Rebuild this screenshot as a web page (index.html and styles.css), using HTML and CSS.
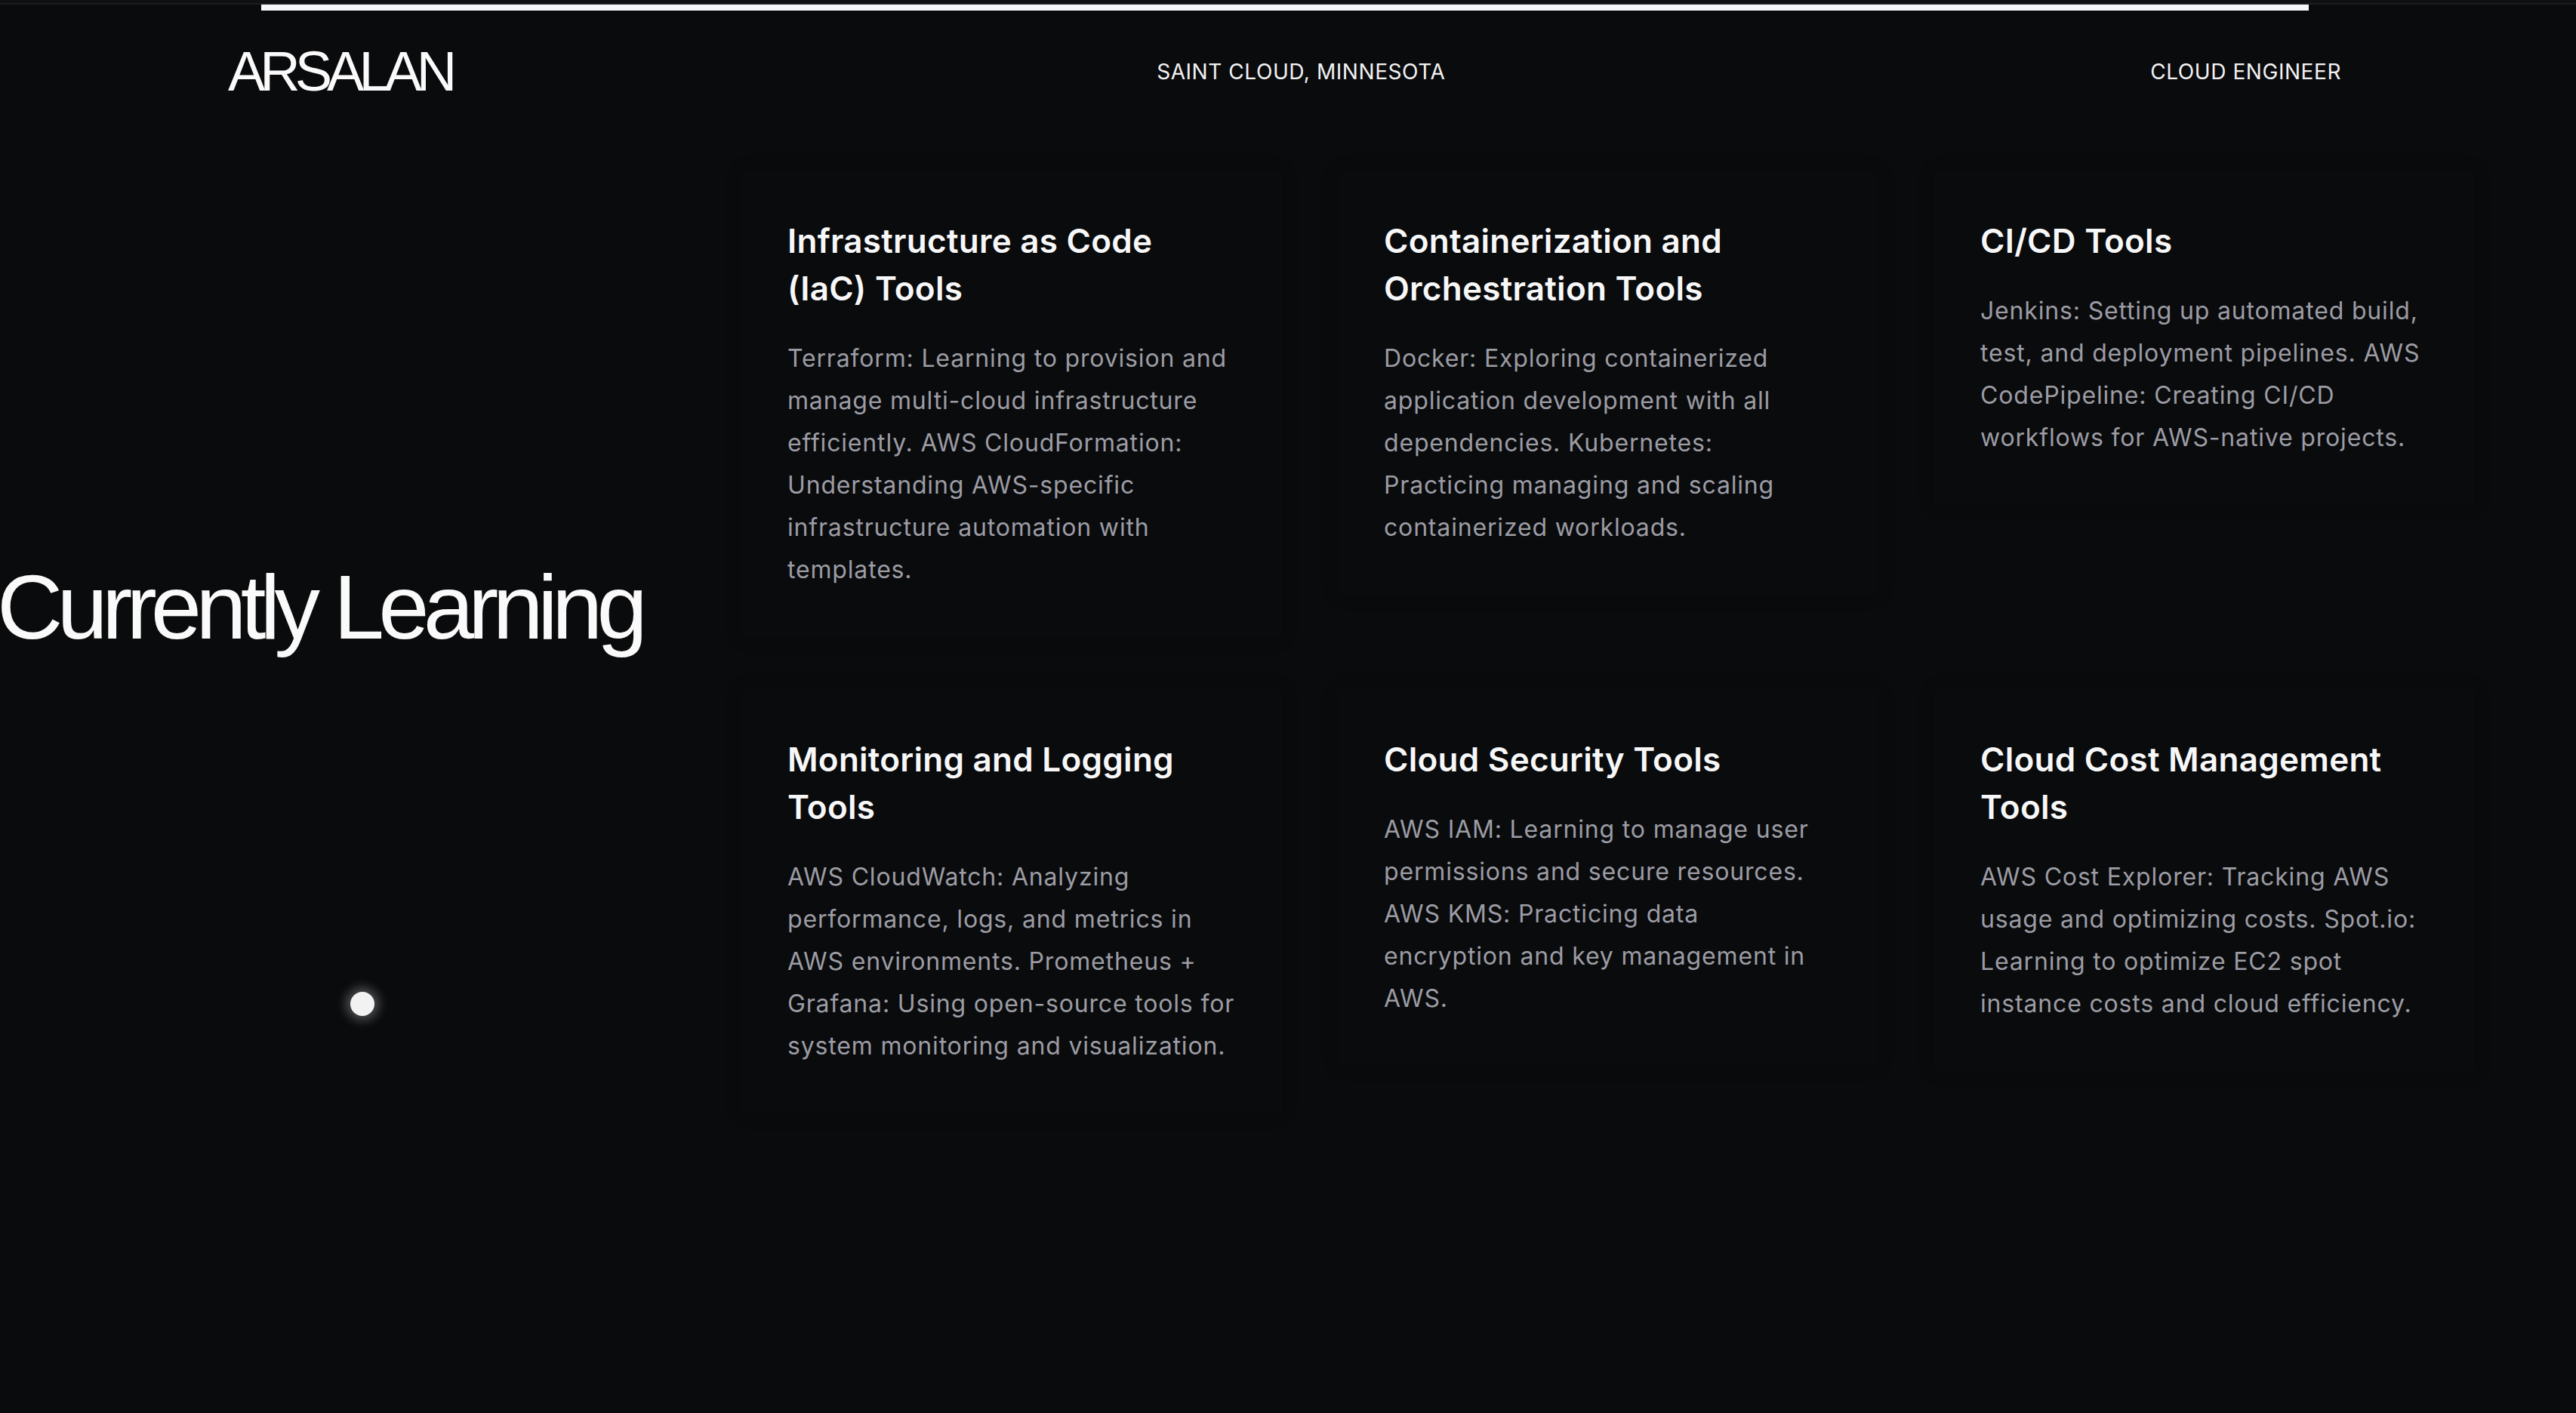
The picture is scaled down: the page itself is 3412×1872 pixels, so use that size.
FILE: index.html
```html
<!DOCTYPE html>
<html lang="en">
<head>
<meta charset="utf-8">
<title>Arsalan — Currently Learning</title>
<link rel="stylesheet" href="styles.css">
</head>
<body>
  <div class="scroll-track"></div>
  <div class="scroll-progress"><div class="scroll-progress-bar"></div></div>
  <header class="site-header">
    <div class="logo">ARSALAN</div>
    <div class="header-meta">SAINT CLOUD, MINNESOTA</div>
    <div class="header-meta">CLOUD ENGINEER</div>
  </header>
  <main class="learning">
    <div class="learning-aside">
      <h1 class="learning-title">Currently Learning</h1>
    </div>
    <div class="learning-grid">
      <article class="card">
        <h2 class="card-title">Infrastructure as Code (IaC) Tools</h2>
        <p class="card-text">Terraform: Learning to provision and manage multi-cloud infrastructure efficiently. AWS CloudFormation: Understanding AWS-specific infrastructure automation with templates.</p>
      </article>
      <article class="card">
        <h2 class="card-title">Containerization and Orchestration Tools</h2>
        <p class="card-text">Docker: Exploring containerized application development with all dependencies. Kubernetes: Practicing managing and scaling containerized workloads.</p>
      </article>
      <article class="card">
        <h2 class="card-title">CI/CD Tools</h2>
        <p class="card-text">Jenkins: Setting up automated build, test, and deployment pipelines. AWS CodePipeline: Creating CI/CD workflows for AWS-native projects.</p>
      </article>
      <article class="card">
        <h2 class="card-title">Monitoring and Logging Tools</h2>
        <p class="card-text">AWS CloudWatch: Analyzing performance, logs, and metrics in AWS environments. Prometheus + Grafana: Using open-source tools for system monitoring and visualization.</p>
      </article>
      <article class="card">
        <h2 class="card-title">Cloud Security Tools</h2>
        <p class="card-text">AWS IAM: Learning to manage user permissions and secure resources. AWS KMS: Practicing data encryption and key management in AWS.</p>
      </article>
      <article class="card">
        <h2 class="card-title">Cloud Cost Management Tools</h2>
        <p class="card-text">AWS Cost Explorer: Tracking AWS usage and optimizing costs. Spot.io: Learning to optimize EC2 spot instance costs and cloud efficiency.</p>
      </article>
    </div>
  </main>
  <div class="cursor-dot"></div>
</body>
</html>
```
FILE: styles.css
```css
* { box-sizing: border-box; }

html, body {
  margin: 0;
  padding: 0;
}

body {
  width: 3412px;
  height: 1872px;
  overflow: hidden;
  background: #0a0b0d;
  color: #f7f7f8;
  font-family: Inter, "Helvetica Neue", "Liberation Sans", Arial, sans-serif;
  position: relative;
}

.scroll-track {
  height: 6px;
  background: #0f1012;
  border-bottom: 2px solid #1d1e21;
}

.scroll-progress {
  height: 8px;
  padding-left: 346px;
}

.scroll-progress-bar {
  width: 2712px;
  height: 8px;
  background: #f7f7f7;
}

.site-header {
  height: 162px;
  padding: 0 311px 0 302px;
  display: flex;
  justify-content: space-between;
  align-items: center;
}

.logo {
  font-family: "Liberation Sans", Arial, sans-serif;
  font-size: 74px;
  line-height: 1;
  letter-spacing: -0.095em;
  color: #fafafa;
}

.header-meta {
  font-family: Inter, "Liberation Sans", sans-serif;
  font-size: 28px;
  line-height: 1;
  letter-spacing: 0.02em;
  color: #f2f2f3;
}

.learning {
  display: flex;
  padding-top: 51px;
}

.learning-aside {
  width: 983px;
  flex: none;
  padding-top: 517px;
}

.learning-title {
  margin: 0 0 0 -4px;
  font-family: "Liberation Sans", Arial, sans-serif;
  font-weight: 400;
  font-size: 121px;
  line-height: 1;
  letter-spacing: -0.065em;
  color: #fafafa;
  white-space: nowrap;
}

.learning-grid {
  display: grid;
  grid-template-columns: repeat(3, 714px);
  column-gap: 76px;
  row-gap: 70px;
  align-items: start;
}

.card {
  padding: 60px 59px;
  background: #0a0b0d;
  box-shadow: 0 0 22px rgba(0, 0, 0, 0.18);
  border: 1px solid rgba(255, 255, 255, 0.006);
}

.card-title {
  margin: 0;
  font-size: 44px;
  font-weight: 600;
  line-height: 63px;
  letter-spacing: 0.006em;
  color: #f7f7f8;
}

.card-text {
  margin: 33px 0 0;
  font-size: 32px;
  font-weight: 400;
  line-height: 56px;
  letter-spacing: 0.026em;
  color: #9c9ca4;
}

.cursor-dot {
  position: absolute;
  left: 464px;
  top: 1314px;
  width: 32px;
  height: 32px;
  border-radius: 50%;
  background: #f2f2f2;
  box-shadow: 0 0 14px 6px rgba(255, 255, 255, 0.28);
}
```
